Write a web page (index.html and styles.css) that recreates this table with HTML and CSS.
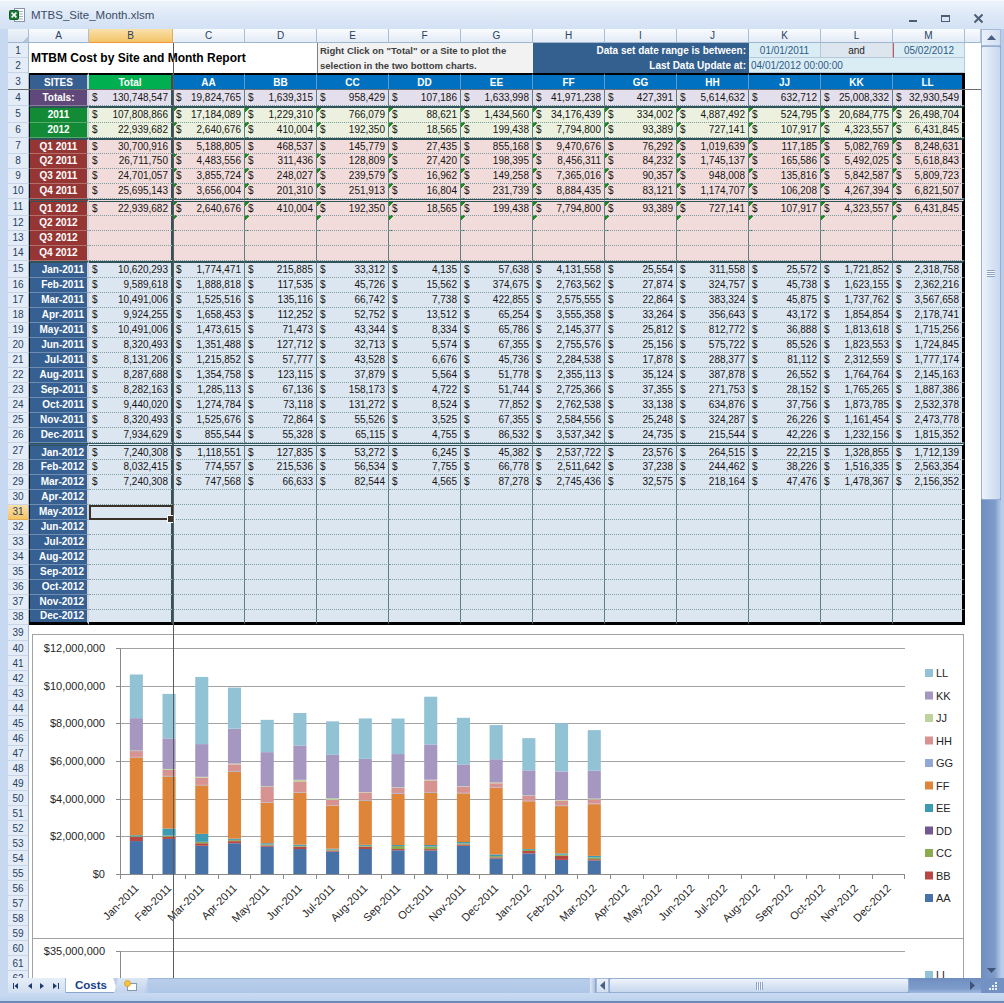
FILE: index.html
```html
<!DOCTYPE html>
<html>
<head>
<meta charset="utf-8">
<title>MTBS_Site_Month.xlsm</title>
<link rel="stylesheet" href="styles.css">
</head>
<body>
<div class="win">
  <div class="titlebar">
    <svg class="xlicon" width="17" height="16" viewBox="0 0 17 16">
      <rect x="5.5" y="1.5" width="10" height="13" fill="#fff" stroke="#8494aa"/>
      <path d="M10 4.5h4M10 7h4M10 9.5h4M10 12h4" stroke="#9fb3c8"/>
      <rect x="0.5" y="3.5" width="9" height="9" rx="1" fill="#1f7d36" stroke="#0f5a24"/>
      <path d="M2.6 5.6l4.8 4.8M7.4 5.6l-4.8 4.8" stroke="#fff" stroke-width="1.5"/>
    </svg>
    <span class="ttl">MTBS_Site_Month.xlsm</span>
    <svg class="wbtns" width="90" height="29" viewBox="0 0 90 29">
      <rect x="9" y="19" width="8" height="2" fill="#4c5d75"/>
      <rect x="41.5" y="14.5" width="8" height="6" fill="none" stroke="#4c5d75"/>
      <rect x="41.5" y="14" width="8" height="2" fill="#4c5d75"/>
      <path d="M74.5 13.5l8 8M82.5 13.5l-8 8" stroke="#4c5d75" stroke-width="2"/>
    </svg>
  </div>

  <div class="main">
    <div class="lframe"></div>
    <div class="sheetwrap">
      <div class="sheet">
        <div class="r ch"><div class="corner"></div><div>A</div><div class="hl">B</div><div>C</div><div>D</div><div>E</div><div>F</div><div>G</div><div>H</div><div>I</div><div>J</div><div>K</div><div>L</div><div>M</div><div></div></div>

        <div class="r top1"><div class="rh">1</div><div class="title">MTBM Cost by Site and Month Report</div><div class="note">Right Click on "Total" or a Site to plot the<br>selection in the two bottom charts.</div><div class="dr">Data set date range is between:</div><div class="dt">01/01/2011</div><div class="and">and</div><div class="dt dt2">05/02/2012</div><div class="nn"></div></div>
        <div class="r top2"><div class="rh">2</div><div class="dr">Last Data Update at:</div><div class="upd">04/01/2012 00:00:00</div><div class="nn"></div></div>

        <div class="r hd"><div class="rh">3</div><div>SITES</div><div>Total</div><div>AA</div><div>BB</div><div>CC</div><div>DD</div><div>EE</div><div>FF</div><div>GG</div><div>HH</div><div>JJ</div><div>KK</div><div>LL</div><div></div></div>

        <div class="r d g4"><div class="rh">4</div><div>Totals:</div><div>$<i>130,748,547</i></div><div>$<i>19,824,765</i></div><div>$<i>1,639,315</i></div><div>$<i>958,429</i></div><div>$<i>107,186</i></div><div>$<i>1,633,998</i></div><div>$<i>41,971,238</i></div><div>$<i>427,391</i></div><div>$<i>5,614,632</i></div><div>$<i>632,712</i></div><div>$<i>25,008,332</i></div><div>$<i>32,930,549</i></div><div></div></div>

        <div class="r d gy gt t"><div class="rh">5</div><div>2011</div><div>$<i>107,808,866</i></div><div>$<i>17,184,089</i></div><div>$<i>1,229,310</i></div><div>$<i>766,079</i></div><div>$<i>88,621</i></div><div>$<i>1,434,560</i></div><div>$<i>34,176,439</i></div><div>$<i>334,002</i></div><div>$<i>4,887,492</i></div><div>$<i>524,795</i></div><div>$<i>20,684,775</i></div><div>$<i>26,498,704</i></div><div></div></div>
        <div class="r d gy t"><div class="rh">6</div><div>2012</div><div>$<i>22,939,682</i></div><div>$<i>2,640,676</i></div><div>$<i>410,004</i></div><div>$<i>192,350</i></div><div>$<i>18,565</i></div><div>$<i>199,438</i></div><div>$<i>7,794,800</i></div><div>$<i>93,389</i></div><div>$<i>727,141</i></div><div>$<i>107,917</i></div><div>$<i>4,323,557</i></div><div>$<i>6,431,845</i></div><div></div></div>

        <div class="r d gq gt t7"><div class="rh">7</div><div>Q1 2011</div><div>$<i>30,700,916</i></div><div>$<i>5,188,805</i></div><div>$<i>468,537</i></div><div>$<i>145,779</i></div><div>$<i>27,435</i></div><div>$<i>855,168</i></div><div>$<i>9,470,676</i></div><div>$<i>76,292</i></div><div>$<i>1,019,639</i></div><div>$<i>117,185</i></div><div>$<i>5,082,769</i></div><div>$<i>8,248,631</i></div><div></div></div>
        <div class="r d gq t"><div class="rh">8</div><div>Q2 2011</div><div>$<i>26,711,750</i></div><div>$<i>4,483,556</i></div><div>$<i>311,436</i></div><div>$<i>128,809</i></div><div>$<i>27,420</i></div><div>$<i>198,395</i></div><div>$<i>8,456,311</i></div><div>$<i>84,232</i></div><div>$<i>1,745,137</i></div><div>$<i>165,586</i></div><div>$<i>5,492,025</i></div><div>$<i>5,618,843</i></div><div></div></div>
        <div class="r d gq t"><div class="rh">9</div><div>Q3 2011</div><div>$<i>24,701,057</i></div><div>$<i>3,855,724</i></div><div>$<i>248,027</i></div><div>$<i>239,579</i></div><div>$<i>16,962</i></div><div>$<i>149,258</i></div><div>$<i>7,365,016</i></div><div>$<i>90,357</i></div><div>$<i>948,008</i></div><div>$<i>135,816</i></div><div>$<i>5,842,587</i></div><div>$<i>5,809,723</i></div><div></div></div>
        <div class="r d gq t"><div class="rh">10</div><div>Q4 2011</div><div>$<i>25,695,143</i></div><div>$<i>3,656,004</i></div><div>$<i>201,310</i></div><div>$<i>251,913</i></div><div>$<i>16,804</i></div><div>$<i>231,739</i></div><div>$<i>8,884,435</i></div><div>$<i>83,121</i></div><div>$<i>1,174,707</i></div><div>$<i>106,208</i></div><div>$<i>4,267,394</i></div><div>$<i>6,821,507</i></div><div></div></div>
        <div class="r d gq gd t"><div class="rh">11</div><div>Q1 2012</div><div>$<i>22,939,682</i></div><div>$<i>2,640,676</i></div><div>$<i>410,004</i></div><div>$<i>192,350</i></div><div>$<i>18,565</i></div><div>$<i>199,438</i></div><div>$<i>7,794,800</i></div><div>$<i>93,389</i></div><div>$<i>727,141</i></div><div>$<i>107,917</i></div><div>$<i>4,323,557</i></div><div>$<i>6,431,845</i></div><div></div></div>
        <div class="r d gq t"><div class="rh">12</div><div>Q2 2012</div><div></div><div></div><div></div><div></div><div></div><div></div><div></div><div></div><div></div><div></div><div></div><div></div><div></div></div>
        <div class="r d gq"><div class="rh">13</div><div>Q3 2012</div><div></div><div></div><div></div><div></div><div></div><div></div><div></div><div></div><div></div><div></div><div></div><div></div><div></div></div>
        <div class="r d gq"><div class="rh">14</div><div>Q4 2012</div><div></div><div></div><div></div><div></div><div></div><div></div><div></div><div></div><div></div><div></div><div></div><div></div><div></div></div>

        <div class="r d gm gt"><div class="rh">15</div><div>Jan-2011</div><div>$<i>10,620,293</i></div><div>$<i>1,774,471</i></div><div>$<i>215,885</i></div><div>$<i>33,312</i></div><div>$<i>4,135</i></div><div>$<i>57,638</i></div><div>$<i>4,131,558</i></div><div>$<i>25,554</i></div><div>$<i>311,558</i></div><div>$<i>25,572</i></div><div>$<i>1,721,852</i></div><div>$<i>2,318,758</i></div><div></div></div>
        <div class="r d gm"><div class="rh">16</div><div>Feb-2011</div><div>$<i>9,589,618</i></div><div>$<i>1,888,818</i></div><div>$<i>117,535</i></div><div>$<i>45,726</i></div><div>$<i>15,562</i></div><div>$<i>374,675</i></div><div>$<i>2,763,562</i></div><div>$<i>27,874</i></div><div>$<i>324,757</i></div><div>$<i>45,738</i></div><div>$<i>1,623,155</i></div><div>$<i>2,362,216</i></div><div></div></div>
        <div class="r d gm"><div class="rh">17</div><div>Mar-2011</div><div>$<i>10,491,006</i></div><div>$<i>1,525,516</i></div><div>$<i>135,116</i></div><div>$<i>66,742</i></div><div>$<i>7,738</i></div><div>$<i>422,855</i></div><div>$<i>2,575,555</i></div><div>$<i>22,864</i></div><div>$<i>383,324</i></div><div>$<i>45,875</i></div><div>$<i>1,737,762</i></div><div>$<i>3,567,658</i></div><div></div></div>
        <div class="r d gm"><div class="rh">18</div><div>Apr-2011</div><div>$<i>9,924,255</i></div><div>$<i>1,658,453</i></div><div>$<i>112,252</i></div><div>$<i>52,752</i></div><div>$<i>13,512</i></div><div>$<i>65,254</i></div><div>$<i>3,555,358</i></div><div>$<i>33,264</i></div><div>$<i>356,643</i></div><div>$<i>43,172</i></div><div>$<i>1,854,854</i></div><div>$<i>2,178,741</i></div><div></div></div>
        <div class="r d gm"><div class="rh">19</div><div>May-2011</div><div>$<i>10,491,006</i></div><div>$<i>1,473,615</i></div><div>$<i>71,473</i></div><div>$<i>43,344</i></div><div>$<i>8,334</i></div><div>$<i>65,786</i></div><div>$<i>2,145,377</i></div><div>$<i>25,812</i></div><div>$<i>812,772</i></div><div>$<i>36,888</i></div><div>$<i>1,813,618</i></div><div>$<i>1,715,256</i></div><div></div></div>
        <div class="r d gm"><div class="rh">20</div><div>Jun-2011</div><div>$<i>8,320,493</i></div><div>$<i>1,351,488</i></div><div>$<i>127,712</i></div><div>$<i>32,713</i></div><div>$<i>5,574</i></div><div>$<i>67,355</i></div><div>$<i>2,755,576</i></div><div>$<i>25,156</i></div><div>$<i>575,722</i></div><div>$<i>85,526</i></div><div>$<i>1,823,553</i></div><div>$<i>1,724,845</i></div><div></div></div>
        <div class="r d gm"><div class="rh">21</div><div>Jul-2011</div><div>$<i>8,131,206</i></div><div>$<i>1,215,852</i></div><div>$<i>57,777</i></div><div>$<i>43,528</i></div><div>$<i>6,676</i></div><div>$<i>45,736</i></div><div>$<i>2,284,538</i></div><div>$<i>17,878</i></div><div>$<i>288,377</i></div><div>$<i>81,112</i></div><div>$<i>2,312,559</i></div><div>$<i>1,777,174</i></div><div></div></div>
        <div class="r d gm"><div class="rh">22</div><div>Aug-2011</div><div>$<i>8,287,688</i></div><div>$<i>1,354,758</i></div><div>$<i>123,115</i></div><div>$<i>37,879</i></div><div>$<i>5,564</i></div><div>$<i>51,778</i></div><div>$<i>2,355,113</i></div><div>$<i>35,124</i></div><div>$<i>387,878</i></div><div>$<i>26,552</i></div><div>$<i>1,764,764</i></div><div>$<i>2,145,163</i></div><div></div></div>
        <div class="r d gm"><div class="rh">23</div><div>Sep-2011</div><div>$<i>8,282,163</i></div><div>$<i>1,285,113</i></div><div>$<i>67,136</i></div><div>$<i>158,173</i></div><div>$<i>4,722</i></div><div>$<i>51,744</i></div><div>$<i>2,725,366</i></div><div>$<i>37,355</i></div><div>$<i>271,753</i></div><div>$<i>28,152</i></div><div>$<i>1,765,265</i></div><div>$<i>1,887,386</i></div><div></div></div>
        <div class="r d gm"><div class="rh">24</div><div>Oct-2011</div><div>$<i>9,440,020</i></div><div>$<i>1,274,784</i></div><div>$<i>73,118</i></div><div>$<i>131,272</i></div><div>$<i>8,524</i></div><div>$<i>77,852</i></div><div>$<i>2,762,538</i></div><div>$<i>33,138</i></div><div>$<i>634,876</i></div><div>$<i>37,756</i></div><div>$<i>1,873,785</i></div><div>$<i>2,532,378</i></div><div></div></div>
        <div class="r d gm"><div class="rh">25</div><div>Nov-2011</div><div>$<i>8,320,493</i></div><div>$<i>1,525,676</i></div><div>$<i>72,864</i></div><div>$<i>55,526</i></div><div>$<i>3,525</i></div><div>$<i>67,355</i></div><div>$<i>2,584,556</i></div><div>$<i>25,248</i></div><div>$<i>324,287</i></div><div>$<i>26,226</i></div><div>$<i>1,161,454</i></div><div>$<i>2,473,778</i></div><div></div></div>
        <div class="r d gm"><div class="rh">26</div><div>Dec-2011</div><div>$<i>7,934,629</i></div><div>$<i>855,544</i></div><div>$<i>55,328</i></div><div>$<i>65,115</i></div><div>$<i>4,755</i></div><div>$<i>86,532</i></div><div>$<i>3,537,342</i></div><div>$<i>24,735</i></div><div>$<i>215,544</i></div><div>$<i>42,226</i></div><div>$<i>1,232,156</i></div><div>$<i>1,815,352</i></div><div></div></div>
        <div class="r d gm gd"><div class="rh">27</div><div>Jan-2012</div><div>$<i>7,240,308</i></div><div>$<i>1,118,551</i></div><div>$<i>127,835</i></div><div>$<i>53,272</i></div><div>$<i>6,245</i></div><div>$<i>45,382</i></div><div>$<i>2,537,722</i></div><div>$<i>23,576</i></div><div>$<i>264,515</i></div><div>$<i>22,215</i></div><div>$<i>1,328,855</i></div><div>$<i>1,712,139</i></div><div></div></div>
        <div class="r d gm"><div class="rh">28</div><div>Feb-2012</div><div>$<i>8,032,415</i></div><div>$<i>774,557</i></div><div>$<i>215,536</i></div><div>$<i>56,534</i></div><div>$<i>7,755</i></div><div>$<i>66,778</i></div><div>$<i>2,511,642</i></div><div>$<i>37,238</i></div><div>$<i>244,462</i></div><div>$<i>38,226</i></div><div>$<i>1,516,335</i></div><div>$<i>2,563,354</i></div><div></div></div>
        <div class="r d gm"><div class="rh">29</div><div>Mar-2012</div><div>$<i>7,240,308</i></div><div>$<i>747,568</i></div><div>$<i>66,633</i></div><div>$<i>82,544</i></div><div>$<i>4,565</i></div><div>$<i>87,278</i></div><div>$<i>2,745,436</i></div><div>$<i>32,575</i></div><div>$<i>218,164</i></div><div>$<i>47,476</i></div><div>$<i>1,478,367</i></div><div>$<i>2,156,352</i></div><div></div></div>
        <div class="r d gm"><div class="rh">30</div><div>Apr-2012</div><div></div><div></div><div></div><div></div><div></div><div></div><div></div><div></div><div></div><div></div><div></div><div></div><div></div></div>
        <div class="r d gm"><div class="rh hl">31</div><div>May-2012</div><div class="sel"></div><div></div><div></div><div></div><div></div><div></div><div></div><div></div><div></div><div></div><div></div><div></div><div></div></div>
        <div class="r d gm"><div class="rh">32</div><div>Jun-2012</div><div></div><div></div><div></div><div></div><div></div><div></div><div></div><div></div><div></div><div></div><div></div><div></div><div></div></div>
        <div class="r d gm"><div class="rh">33</div><div>Jul-2012</div><div></div><div></div><div></div><div></div><div></div><div></div><div></div><div></div><div></div><div></div><div></div><div></div><div></div></div>
        <div class="r d gm"><div class="rh">34</div><div>Aug-2012</div><div></div><div></div><div></div><div></div><div></div><div></div><div></div><div></div><div></div><div></div><div></div><div></div><div></div></div>
        <div class="r d gm"><div class="rh">35</div><div>Sep-2012</div><div></div><div></div><div></div><div></div><div></div><div></div><div></div><div></div><div></div><div></div><div></div><div></div><div></div></div>
        <div class="r d gm"><div class="rh">36</div><div>Oct-2012</div><div></div><div></div><div></div><div></div><div></div><div></div><div></div><div></div><div></div><div></div><div></div><div></div><div></div></div>
        <div class="r d gm"><div class="rh">37</div><div>Nov-2012</div><div></div><div></div><div></div><div></div><div></div><div></div><div></div><div></div><div></div><div></div><div></div><div></div><div></div></div>
        <div class="r d gm gl"><div class="rh">38</div><div>Dec-2012</div><div></div><div></div><div></div><div></div><div></div><div></div><div></div><div></div><div></div><div></div><div></div><div></div><div></div></div>

        <div class="r e"><div class="rh">39</div><div></div></div>
        <div class="r e"><div class="rh">40</div><div></div></div>
        <div class="r e"><div class="rh">41</div><div></div></div>
        <div class="r e"><div class="rh">42</div><div></div></div>
        <div class="r e"><div class="rh">43</div><div></div></div>
        <div class="r e"><div class="rh">44</div><div></div></div>
        <div class="r e"><div class="rh">45</div><div></div></div>
        <div class="r e"><div class="rh">46</div><div></div></div>
        <div class="r e"><div class="rh">47</div><div></div></div>
        <div class="r e"><div class="rh">48</div><div></div></div>
        <div class="r e"><div class="rh">49</div><div></div></div>
        <div class="r e"><div class="rh">50</div><div></div></div>
        <div class="r e"><div class="rh">51</div><div></div></div>
        <div class="r e"><div class="rh">52</div><div></div></div>
        <div class="r e"><div class="rh">53</div><div></div></div>
        <div class="r e"><div class="rh">54</div><div></div></div>
        <div class="r e"><div class="rh">55</div><div></div></div>
        <div class="r e"><div class="rh">56</div><div></div></div>
        <div class="r e"><div class="rh">57</div><div></div></div>
        <div class="r e"><div class="rh">58</div><div></div></div>
        <div class="r e"><div class="rh">59</div><div></div></div>
        <div class="r e"><div class="rh">60</div><div></div></div>
        <div class="r e"><div class="rh">61</div><div></div></div>
        <div class="r e"><div class="rh">62</div><div></div></div>
      </div>

      <svg class="chart" width="933" height="344" viewBox="0 0 933 344">
        <rect x="0.5" y="0.5" width="931" height="304" fill="#fff" stroke="#a2a2a2"/>
        <rect x="0.5" y="304.5" width="931" height="60" fill="#fff" stroke="#a2a2a2"/>
        <path class="grid" d="M88 14.5H873M88 52.5H873M88 89.5H873M88 127.5H873M88 165.5H873M88 202.5H873"/>
        <g class="ylab">
          <text x="73" y="18">$12,000,000</text>
          <text x="73" y="56">$10,000,000</text>
          <text x="73" y="93">$8,000,000</text>
          <text x="73" y="131">$6,000,000</text>
          <text x="73" y="169">$4,000,000</text>
          <text x="73" y="206">$2,000,000</text>
          <text x="73" y="244">$0</text>
        </g>
        <g id="bars"></g>
        <path class="axis" d="M88.5 14.5V240.5M84 14.5H88.5M84 52.5H88.5M84 89.5H88.5M84 127.5H88.5M84 165.5H88.5M84 202.5H88.5M84 240.5H873M88.5 240.5V245M120.5 240.5V245M153.5 240.5V245M186.5 240.5V245M218.5 240.5V245M251.5 240.5V245M284.5 240.5V245M316.5 240.5V245M349.5 240.5V245M382.5 240.5V245M415.5 240.5V245M447.5 240.5V245M480.5 240.5V245M513.5 240.5V245M545.5 240.5V245M578.5 240.5V245M611.5 240.5V245M644.5 240.5V245M676.5 240.5V245M709.5 240.5V245M742.5 240.5V245M774.5 240.5V245M807.5 240.5V245M840.5 240.5V245M872.5 240.5V245"/>
        <g class="xlab">
          <text transform="translate(107.4 255) rotate(-45)">Jan-2011</text>
          <text transform="translate(140.1 255) rotate(-45)">Feb-2011</text>
          <text transform="translate(172.8 255) rotate(-45)">Mar-2011</text>
          <text transform="translate(205.5 255) rotate(-45)">Apr-2011</text>
          <text transform="translate(238.2 255) rotate(-45)">May-2011</text>
          <text transform="translate(270.9 255) rotate(-45)">Jun-2011</text>
          <text transform="translate(303.6 255) rotate(-45)">Jul-2011</text>
          <text transform="translate(336.3 255) rotate(-45)">Aug-2011</text>
          <text transform="translate(369.0 255) rotate(-45)">Sep-2011</text>
          <text transform="translate(401.7 255) rotate(-45)">Oct-2011</text>
          <text transform="translate(434.4 255) rotate(-45)">Nov-2011</text>
          <text transform="translate(467.1 255) rotate(-45)">Dec-2011</text>
          <text transform="translate(499.9 255) rotate(-45)">Jan-2012</text>
          <text transform="translate(532.6 255) rotate(-45)">Feb-2012</text>
          <text transform="translate(565.3 255) rotate(-45)">Mar-2012</text>
          <text transform="translate(598.0 255) rotate(-45)">Apr-2012</text>
          <text transform="translate(630.7 255) rotate(-45)">May-2012</text>
          <text transform="translate(663.4 255) rotate(-45)">Jun-2012</text>
          <text transform="translate(696.1 255) rotate(-45)">Jul-2012</text>
          <text transform="translate(728.8 255) rotate(-45)">Aug-2012</text>
          <text transform="translate(761.5 255) rotate(-45)">Sep-2012</text>
          <text transform="translate(794.2 255) rotate(-45)">Oct-2012</text>
          <text transform="translate(826.9 255) rotate(-45)">Nov-2012</text>
          <text transform="translate(859.6 255) rotate(-45)">Dec-2012</text>
        </g>
        <g class="legend">
          <rect x="893" y="35" width="8" height="8" fill="#92c3d5"/><text x="904" y="43">LL</text>
          <rect x="893" y="57.5" width="8" height="8" fill="#a697c0"/><text x="904" y="65.5">KK</text>
          <rect x="893" y="80" width="8" height="8" fill="#bcd39b"/><text x="904" y="88">JJ</text>
          <rect x="893" y="102.5" width="8" height="8" fill="#d79391"/><text x="904" y="110.5">HH</text>
          <rect x="893" y="125" width="8" height="8" fill="#92a8d4"/><text x="904" y="133">GG</text>
          <rect x="893" y="147.5" width="8" height="8" fill="#de8539"/><text x="904" y="155.5">FF</text>
          <rect x="893" y="170" width="8" height="8" fill="#3d9bb4"/><text x="904" y="178">EE</text>
          <rect x="893" y="192.5" width="8" height="8" fill="#735894"/><text x="904" y="200.5">DD</text>
          <rect x="893" y="215" width="8" height="8" fill="#8aab4e"/><text x="904" y="223">CC</text>
          <rect x="893" y="237.5" width="8" height="8" fill="#b84744"/><text x="904" y="245.5">BB</text>
          <rect x="893" y="260" width="8" height="8" fill="#4672a8"/><text x="904" y="268">AA</text>
        </g>
        <path class="grid" d="M88 317.5H873"/>
        <path class="axis" d="M88.5 317.5V344M84 317.5H88.5"/>
        <g class="ylab"><text x="73" y="321">$35,000,000</text></g>
        <g class="legend"><rect x="893" y="337" width="8" height="8" fill="#92c3d5"/><text x="904" y="345">LL</text></g>
      </svg>

      <div class="vfreeze"></div>
      <div class="hfreeze"></div>
    </div>
    <div class="vscroll">
      <div class="vbtn"><svg width="9" height="5" viewBox="0 0 9 5"><path d="M0 5L4.5 0L9 5Z" fill="#4a5f86"/></svg></div>
      <div class="vthumb"><span class="grip"></span></div>
      <div class="vtrack"><svg width="9" height="5" viewBox="0 0 9 5"><path d="M0 0L4.5 5L9 0Z" fill="#3f5479"/></svg></div>
    </div>
    <div class="rframe"></div>
  </div>

  <div class="tabbar">
    <div class="tframe"></div>
    <div class="tnav">
      <svg width="58" height="15" viewBox="0 0 58 15">
        <path d="M5.5 5V11" stroke="#1f3b6d"/>
        <path d="M10 5L6.5 8L10 11Z M24 5L20 8L24 11Z M32 5L36 8L32 11Z M45 5L49 8L45 11Z" fill="#1f3b6d"/>
        <path d="M50.5 5V11" stroke="#1f3b6d"/>
      </svg>
    </div>
    <div class="tab">Costs</div>
    <div class="newtab">
      <svg width="16" height="12" viewBox="0 0 16 12">
        <rect x="4.5" y="3.5" width="9" height="7" fill="#fff" stroke="#8797ad"/>
        <circle cx="4.5" cy="3.5" r="3" fill="#f3c342" stroke="#d99a1c" stroke-width="0.8"/>
      </svg>
    </div>
    <div class="tfill"></div>
    <div class="hscroll">
      <div class="hsplit"></div>
      <div class="hbtn"><svg width="5" height="9" viewBox="0 0 5 9"><path d="M5 0L0 4.5L5 9Z" fill="#4a5f86"/></svg></div>
      <div class="hthumb"><span class="hgrip"></span></div>
      <div class="htrack"><svg width="5" height="9" viewBox="0 0 5 9"><path d="M0 0L5 4.5L0 9Z" fill="#3f5479"/></svg></div>
    </div>
    <div class="hcorner">
      <svg width="12" height="10" viewBox="0 0 12 10"><path d="M9 1h2v2h-2zM6 4h2v2h-2zM9 4h2v2h-2zM3 7h2v2h-2zM6 7h2v2h-2zM9 7h2v2h-2z" fill="#eaf1fb"/></svg>
    </div>
  </div>
  <div class="status"></div>
</div>
<script src="script.js"></script>
</body>
</html>
```

FILE: styles.css
```css
* { box-sizing: border-box; margin: 0; padding: 0; }
html, body { width: 1004px; height: 1003px; overflow: hidden; }
body { font-family: "Liberation Sans", Arial, sans-serif; background: #c4d7ef; }

.win { width: 1004px; height: 1003px; display: flex; flex-direction: column; }

/* title bar */
.titlebar { flex: none; height: 29px; display: flex; align-items: center;
  background: linear-gradient(#eef4fc, #dfe9f7 45%, #d2e1f4); border-top: 1px solid #f7fafe; }
.xlicon { margin-left: 9px; flex: none; }
.ttl { margin-left: 5px; font-size: 11.5px; color: #3b4d66; }
.wbtns { margin-left: auto; margin-right: 14px; flex: none; }

/* main area */
.main { flex: none; height: 949px; display: flex; }
.lframe { width: 8px; flex: none; background: #c7d9f0; }
.rframe { width: 3px; flex: none; background: #b9cdea; }
.sheetwrap { width: 973px; flex: none; position: relative; overflow: hidden; background: #fff; }

.sheet { display: grid;
  grid-template-columns: 21px 60px 84px repeat(11, 72px) 16px;
  grid-template-rows: 14px 15px 15px 17px 16px 17px 15px 16px repeat(3, 15px) 17px repeat(3, 15px) 17px repeat(11, 15px) 17px repeat(11, 15px) 16px repeat(23, 15px);
}
.r { display: contents; }

/* column headers */
.ch > div { display: flex; align-items: center; justify-content: center; font-size: 10px; color: #27415f;
  background: linear-gradient(#f9fbfe, #e3ebf6); border-right: 1px solid #a9bfd6; border-bottom: 1px solid #9eb6ce; }
.ch > div.hl { background: linear-gradient(#fae0ac, #f3c466); border-right-color: #e2ae58; border-bottom-color: #f29536; }
.ch > div.corner { background: linear-gradient(315deg, #b4c6dc 0 4px, transparent 4px), linear-gradient(#eef3f9, #dce6f2); }

/* value rows */
.d > div { font-size: 10px; color: #151515; line-height: 1; white-space: nowrap;
  display: flex; align-items: center; justify-content: space-between; padding: 0 3px;
  background-color: var(--bg); border-right: 1px solid #5d8086; border-bottom: 1px dotted #7f9ca1; }
.d > div i { font-style: normal; }
.d > div:nth-child(3) { border-right: 2px solid #31545a; }
.d > div:nth-child(14) { border-right: 3px solid #000; }
.d > div:nth-child(15) { background: #fff; border: 0; }
.d > div:nth-child(2) { background-color: var(--a); color: #fff; font-weight: bold; justify-content: center;
  border-left: 1px solid #111; border-right: 2px solid #cad2dc; border-bottom: 1px solid rgba(255,255,255,0.28); }
.gm > div:nth-child(2) { justify-content: flex-end; padding-right: 3px; }

.g4 { --bg: #e4dfec; --a: #60497a; }
.gy { --bg: #ebf1de; --a: #138a36; }
.gq { --bg: #f2dcdb; --a: #963634; }
.gm { --bg: #dce6f1; --a: #366092; }

.gt > div:nth-child(n+2):nth-child(-n+14) { border-top: 2px solid #30535a; }
.gd > div:nth-child(n+2):nth-child(-n+14) { border-top: 3px double #30535a; }
.gl > div:nth-child(n+2):nth-child(-n+14) { border-bottom: 3px solid #000; }

.t > div:nth-child(n+4):nth-child(-n+14),
.t7 > div:nth-child(n+11):nth-child(-n+14) {
  background-image: linear-gradient(135deg, #1c8a1c 3.5px, transparent 3.5px); }

/* header row 3 */
.hd > div { display: flex; align-items: center; justify-content: center; color: #fff; font-weight: bold; font-size: 10px;
  background: #0070c0; border-top: 2px solid #000; border-right: 1px solid #5f9bd3; border-bottom: 1px solid #3c4f66; }
.hd > div:nth-child(2) { background: #366092; border-left: 1px solid #111; border-right: 2px solid #cad2dc; }
.hd > div:nth-child(3) { background: #00b050; border-right: 2px solid #31545a; }
.hd > div:nth-child(14) { border-right: 3px solid #000; }
.hd > div:nth-child(15) { background: #fff; border: 0; }

/* row headers */
.r > div.rh { display: flex; align-items: center; justify-content: center; padding: 0;
  font-size: 10px; font-weight: normal; color: #27415f; background: #e4ecf7;
  border: 0; border-right: 1px solid #9eb6ce; border-bottom: 1px solid #c6d5e8; }
.r > div.rh.hl { background: linear-gradient(#fae0ac, #f3c466); border-bottom-color: #e2ae58; }

/* top info rows */
.title { grid-column: span 4; grid-row: span 2; background: #fff; display: flex; align-items: center;
  padding-left: 2px; font-size: 12px; font-weight: bold; color: #000; }
.note { grid-column: span 3; grid-row: span 2; background: #f2f2f2; border-left: 1px solid #7f7f7f;
  font-size: 9.5px; font-weight: bold; color: #3f3f3f; line-height: 15px; padding: 0 0 0 2px; }
.dr { grid-column: span 3; background: #33608f; color: #fff; font-size: 10px; font-weight: bold;
  display: flex; align-items: center; justify-content: flex-end; padding-right: 3px; }
.dt, .and, .upd { font-size: 10px; display: flex; align-items: center; justify-content: center;
  background: #dbedf4; color: #2f5b88; border-right: 1px solid #b6c9dc; border-bottom: 1px solid #b6c9dc; }
.and { background: #dde5ef; color: #262626; }
.dt2 { border-left: 1px solid #d0504d; }
.upd { grid-column: span 3; justify-content: flex-start; padding-left: 2px; }
.nn { background: #fff; }

.e > div:nth-child(2) { grid-column: span 14; background: #fff; }

/* selection */
.d > div.sel { outline: 2px solid #3a3129; outline-offset: -2px; position: relative; }
.sel::after { content: ""; position: absolute; right: -4px; bottom: -4px; width: 6px; height: 6px;
  background: #3a3129; border: 1px solid #fff; }

/* chart */
.chart { position: absolute; left: 24px; top: 605px; }
.chart text { font-family: "Liberation Sans", Arial, sans-serif; font-size: 11px; fill: #262626; }
.chart .ylab text { text-anchor: end; }
.chart .xlab text { text-anchor: end; }
.chart .grid { stroke: #a3a3a3; stroke-width: 1; fill: none; }
.chart .axis { stroke: #8a8a8a; stroke-width: 1; fill: none; }

.vfreeze { position: absolute; left: 165px; top: 14px; bottom: 0; width: 1px; background: #5c5c5c; }
.hfreeze { position: absolute; left: 0; right: 0; top: 60px; height: 1px; background: #6c6c6c; }

/* vertical scrollbar */
.vscroll { width: 20px; flex: none; display: flex; flex-direction: column; background: #7e9cca; }
.vbtn { height: 17px; flex: none; display: flex; align-items: center; justify-content: center;
  background: linear-gradient(90deg, #e9f0fa, #d2dff1); border: 1px solid #a4bad8; }
.vthumb { height: 454px; flex: none; display: flex; align-items: center; justify-content: center;
  background: linear-gradient(90deg, #eef3fb, #d6e2f3 60%, #c8d8ee); border: 1px solid #96afd3; border-radius: 2px; }
.grip { width: 8px; height: 7px; background: repeating-linear-gradient(#8ba3c7 0 1px, #f4f7fc 1px 2px); }
.vtrack { flex: 1; display: flex; align-items: flex-end; justify-content: center; padding-bottom: 5px;
  background: linear-gradient(90deg, #6f8ec0, #7e9cca 70%, #b4c9e8); }

/* tab bar */
.tabbar { flex: none; height: 15px; display: flex; background: #bcd0ec; }
.tframe { width: 8px; flex: none; background: #c7d9f0; }
.tnav { width: 58px; flex: none; background: linear-gradient(#e6eef8, #d2dff0); border-right: 1px solid #a4bad8; }
.tnav svg { display: block; }
.tab { width: 52px; flex: none; background: #fff; color: #15428b; font-size: 11.5px; font-weight: bold;
  display: flex; align-items: center; padding-left: 9px; border-bottom: 1px solid #8ba6cd;
  clip-path: polygon(0 0, 47px 0, 52px 100%, 0 100%); }
.newtab { width: 34px; flex: none; margin-left: -4px; display: flex; align-items: center; justify-content: center;
  background: linear-gradient(#dbe6f4, #c3d4ec); clip-path: polygon(4px 0, 34px 0, 30px 100%, 0 100%); }
.tfill { flex: 1; background: linear-gradient(#b9cdea, #aec6e7); border-top: 1px solid #9cb6da; }
.hscroll { width: 391px; flex: none; display: flex; background: #7e9cca; }
.hsplit { width: 6px; flex: none; background: linear-gradient(90deg, #dfe8f5, #aec2df); border-right: 1px solid #8ea7cc; }
.hbtn { width: 13px; flex: none; display: flex; align-items: center; justify-content: center;
  background: linear-gradient(#e9f0fa, #d2dff1); border: 1px solid #a4bad8; }
.hthumb { width: 300px; flex: none; display: flex; align-items: center; justify-content: center;
  background: linear-gradient(#eef3fb, #d6e2f3 60%, #c8d8ee); border: 1px solid #96afd3; border-radius: 2px; }
.hgrip { width: 7px; height: 8px; background: repeating-linear-gradient(90deg, #8ba3c7 0 1px, #f4f7fc 1px 2px); }
.htrack { flex: 1; display: flex; align-items: center; justify-content: flex-end; padding-right: 6px;
  background: linear-gradient(#6f8ec0, #7e9cca 70%, #9fb8df); }
.hcorner { width: 23px; flex: none; display: flex; align-items: flex-end; justify-content: flex-end; padding: 0 6px 2px 0;
  background: #7391c2; }

.status { flex: none; height: 10px; background: linear-gradient(#c9dbf1, #bdd2ee); border-bottom: 2px solid #6b89b6; }
```

FILE: script.js
```js
(function () {
  var NS = 'http://www.w3.org/2000/svg';
  var colors = ['#4672a8', '#b84744', '#8aab4e', '#735894', '#3d9bb4', '#de8539', '#92a8d4', '#d79391', '#bcd39b', '#a697c0', '#92c3d5'];
  var data = [
    [1774471, 215885, 33312, 4135, 57638, 4131558, 25554, 311558, 25572, 1721852, 2318758],
    [1888818, 117535, 45726, 15562, 374675, 2763562, 27874, 324757, 45738, 1623155, 2362216],
    [1525516, 135116, 66742, 7738, 422855, 2575555, 22864, 383324, 45875, 1737762, 3567658],
    [1658453, 112252, 52752, 13512, 65254, 3555358, 33264, 356643, 43172, 1854854, 2178741],
    [1473615, 71473, 43344, 8334, 65786, 2145377, 25812, 812772, 36888, 1813618, 1715256],
    [1351488, 127712, 32713, 5574, 67355, 2755576, 25156, 575722, 85526, 1823553, 1724845],
    [1215852, 57777, 43528, 6676, 45736, 2284538, 17878, 288377, 81112, 2312559, 1777174],
    [1354758, 123115, 37879, 5564, 51778, 2355113, 35124, 387878, 26552, 1764764, 2145163],
    [1285113, 67136, 158173, 4722, 51744, 2725366, 37355, 271753, 28152, 1765265, 1887386],
    [1274784, 73118, 131272, 8524, 77852, 2762538, 33138, 634876, 37756, 1873785, 2532378],
    [1525676, 72864, 55526, 3525, 67355, 2584556, 25248, 324287, 26226, 1161454, 2473778],
    [855544, 55328, 65115, 4755, 86532, 3537342, 24735, 215544, 42226, 1232156, 1815352],
    [1118551, 127835, 53272, 6245, 45382, 2537722, 23576, 264515, 22215, 1328855, 1712139],
    [774557, 215536, 56534, 7755, 66778, 2511642, 37238, 244462, 38226, 1516335, 2563354],
    [747568, 66633, 82544, 4565, 87278, 2745436, 32575, 218164, 47476, 1478367, 2156352]
  ];
  var g = document.getElementById('bars');
  var cw = 785 / 24, bw = 13.1;
  data.forEach(function (row, k) {
    var x = 88 + k * cw + (cw - bw) / 2;
    var y = 240.5;
    row.forEach(function (v, i) {
      var h = v * 226 / 12e6;
      y -= h;
      var r = document.createElementNS(NS, 'rect');
      r.setAttribute('x', x.toFixed(2));
      r.setAttribute('y', y.toFixed(2));
      r.setAttribute('width', bw);
      r.setAttribute('height', h.toFixed(2));
      r.setAttribute('fill', colors[i]);
      g.appendChild(r);
    });
  });
})();
```
